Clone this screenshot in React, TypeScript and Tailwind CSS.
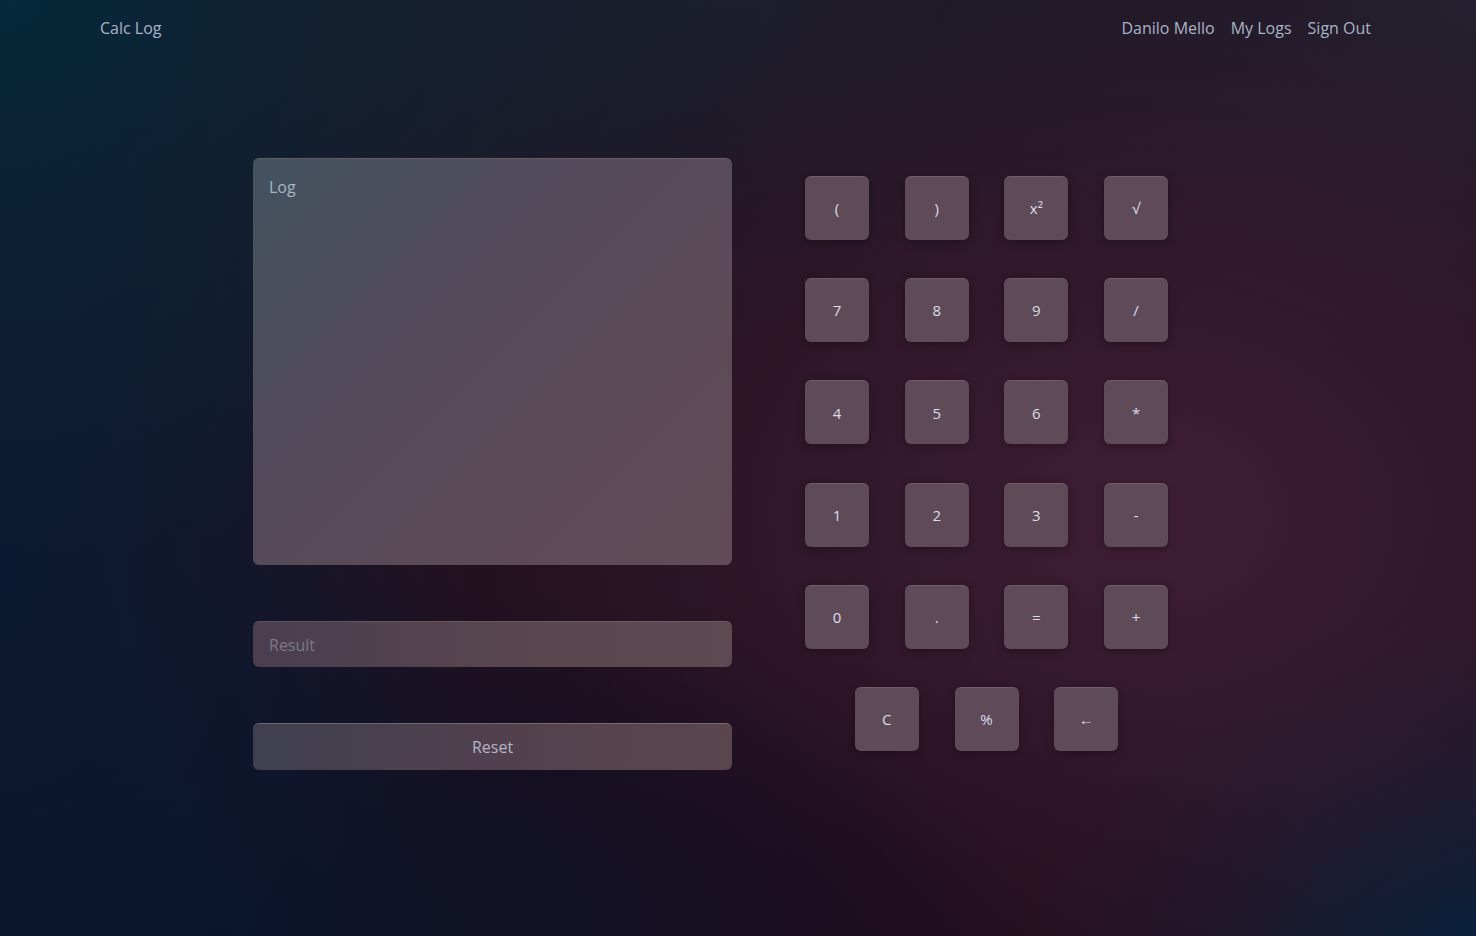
import React from "react";

const keys = [
  ["(", ")", "x²", "√"],
  ["7", "8", "9", "/"],
  ["4", "5", "6", "*"],
  ["1", "2", "3", "-"],
  ["0", ".", "=", "+"],
];

function Key({ label }: { label: string }) {
  return (
    <button className="w-16 h-16 rounded-md bg-[#5f4b57] text-[15px] text-[#dcdcec] shadow-[0_2px_8px_rgba(0,0,0,0.3)] border-t border-white/10 flex items-center justify-center">
      {label}
    </button>
  );
}

export default function App() {
  return (
    <div className="min-h-[936px] w-full font-['Open_Sans',sans-serif] bg-[#24111f] bg-[radial-gradient(55%_60%_at_0%_0%,#05293b_0%,#05293b88_40%,transparent_100%),radial-gradient(32%_70%_at_0%_60%,#0a1a32_0%,#0a1a3299_55%,transparent_100%),radial-gradient(55%_40%_at_15%_100%,#0a1228_0%,#0a122899_50%,transparent_100%),radial-gradient(45%_55%_at_78%_55%,#3f1e35_0%,transparent_100%),radial-gradient(35%_30%_at_55%_92%,#1f0918_0%,transparent_100%),radial-gradient(30%_35%_at_100%_100%,#05203a_0%,transparent_100%),radial-gradient(50%_35%_at_50%_0%,#1f1e2c_0%,transparent_100%),radial-gradient(35%_40%_at_100%_0%,#25202f_0%,transparent_100%)]">
      <nav className="flex items-center justify-between pl-[100px] pr-[105px] h-14 text-[16px] text-[#a9b3c7]">
        <span>Calc Log</span>
        <div className="flex gap-4">
          <span>Danilo Mello</span>
          <span>My Logs</span>
          <span>Sign Out</span>
        </div>
      </nav>

      <main className="flex pl-[253px] pt-[102px] gap-[73px]">
        <div className="w-[479px] flex flex-col">
          <div className="h-[407px] rounded-md bg-[linear-gradient(135deg,#43525f_0%,#544a5a_40%,#5e4a56_75%,#604b57_100%)] border-t border-white/10 px-4 py-[16px] text-[16px] text-[#a9b3c7]">
            Log
          </div>
          <div className="mt-[56px] h-[46px] rounded-md bg-[linear-gradient(90deg,#4a3e4f_0%,#5a464f_60%,#5d4951_100%)] border-t border-white/10 px-4 flex items-center text-[16px] text-[#7e7888]">
            Result
          </div>
          <button className="mt-[56px] h-[47px] rounded-md bg-[linear-gradient(100deg,#3f404f_0%,#51404d_50%,#5b464f_100%)] border-t border-white/20 text-[16px] text-[#b3b5c6]">
            Reset
          </button>
        </div>

        <div className="pt-[18px] flex flex-col gap-[38.2px]">
          {keys.map((row, i) => (
            <div key={i} className="flex gap-[35.7px]">
              {row.map((k) => (
                <Key key={k} label={k} />
              ))}
            </div>
          ))}
          <div className="flex gap-[35.7px] justify-center">
            <Key label="C" />
            <Key label="%" />
            <Key label="←" />
          </div>
        </div>
      </main>
    </div>
  );
}
